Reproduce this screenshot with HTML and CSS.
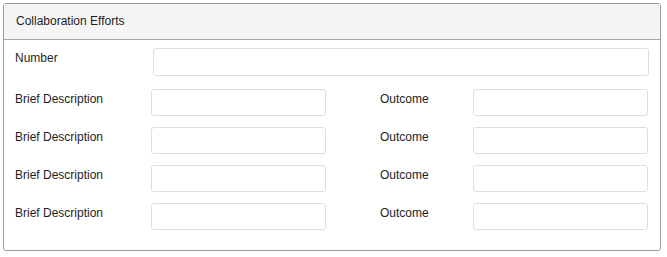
FILE: index.html
```html
<!DOCTYPE html>
<html>
<head>
<meta charset="utf-8">
<link rel="stylesheet" href="styles.css">
</head>
<body>
<div class="panel">
  <div class="panel-heading">Collaboration Efforts</div>
  <div class="panel-body">
    <div class="row-number">
      <label class="lbl">Number</label>
      <input class="field" type="text">
    </div>
    <div class="row-pair">
      <label class="lbl">Brief Description</label>
      <input class="field" type="text">
      <label class="lbl lbl-outcome">Outcome</label>
      <input class="field" type="text">
    </div>
    <div class="row-pair">
      <label class="lbl">Brief Description</label>
      <input class="field" type="text">
      <label class="lbl lbl-outcome">Outcome</label>
      <input class="field" type="text">
    </div>
    <div class="row-pair">
      <label class="lbl">Brief Description</label>
      <input class="field" type="text">
      <label class="lbl lbl-outcome">Outcome</label>
      <input class="field" type="text">
    </div>
    <div class="row-pair">
      <label class="lbl">Brief Description</label>
      <input class="field" type="text">
      <label class="lbl lbl-outcome">Outcome</label>
      <input class="field" type="text">
    </div>
  </div>
</div>
</body>
</html>
```

FILE: styles.css
```css
html, body {
  margin: 0;
  padding: 0;
  background: #ffffff;
}
body {
  padding: 3px 7px 0 3px;
  font-family: "Liberation Sans", Arial, sans-serif;
  font-size: 12px;
  color: #1e1e1e;
}
.panel {
  border: 1px solid #9a9a9a;
  border-radius: 3px;
  box-sizing: border-box;
  width: 658px;
  height: 248px;
  overflow: hidden;
}
.panel-heading {
  height: 35px;
  line-height: 35px;
  background: #f5f5f5;
  border-bottom: 1px solid #a8a8a8;
  padding-left: 12px;
}
.panel-body {
  padding: 8px 11px 0 11px;
  display: flex;
  flex-direction: column;
  gap: 11px;
}
.row-number {
  display: grid;
  grid-template-columns: 138px 1fr;
  margin-bottom: 2px;
}
.row-pair {
  display: grid;
  grid-template-columns: 136px 175px 147px 175px;
}
.lbl {
  padding-top: 3px;
  line-height: 14px;
}
.lbl-outcome {
  padding-left: 54px;
}
.field {
  display: block;
  box-sizing: border-box;
  height: 28px;
  width: 100%;
  margin: 0;
  border: 1px solid #dedede;
  border-radius: 3px;
  background: #fff;
  padding: 0 8px;
  font: inherit;
  outline: none;
}
.row-pair .field {
  height: 27px;
}
```
